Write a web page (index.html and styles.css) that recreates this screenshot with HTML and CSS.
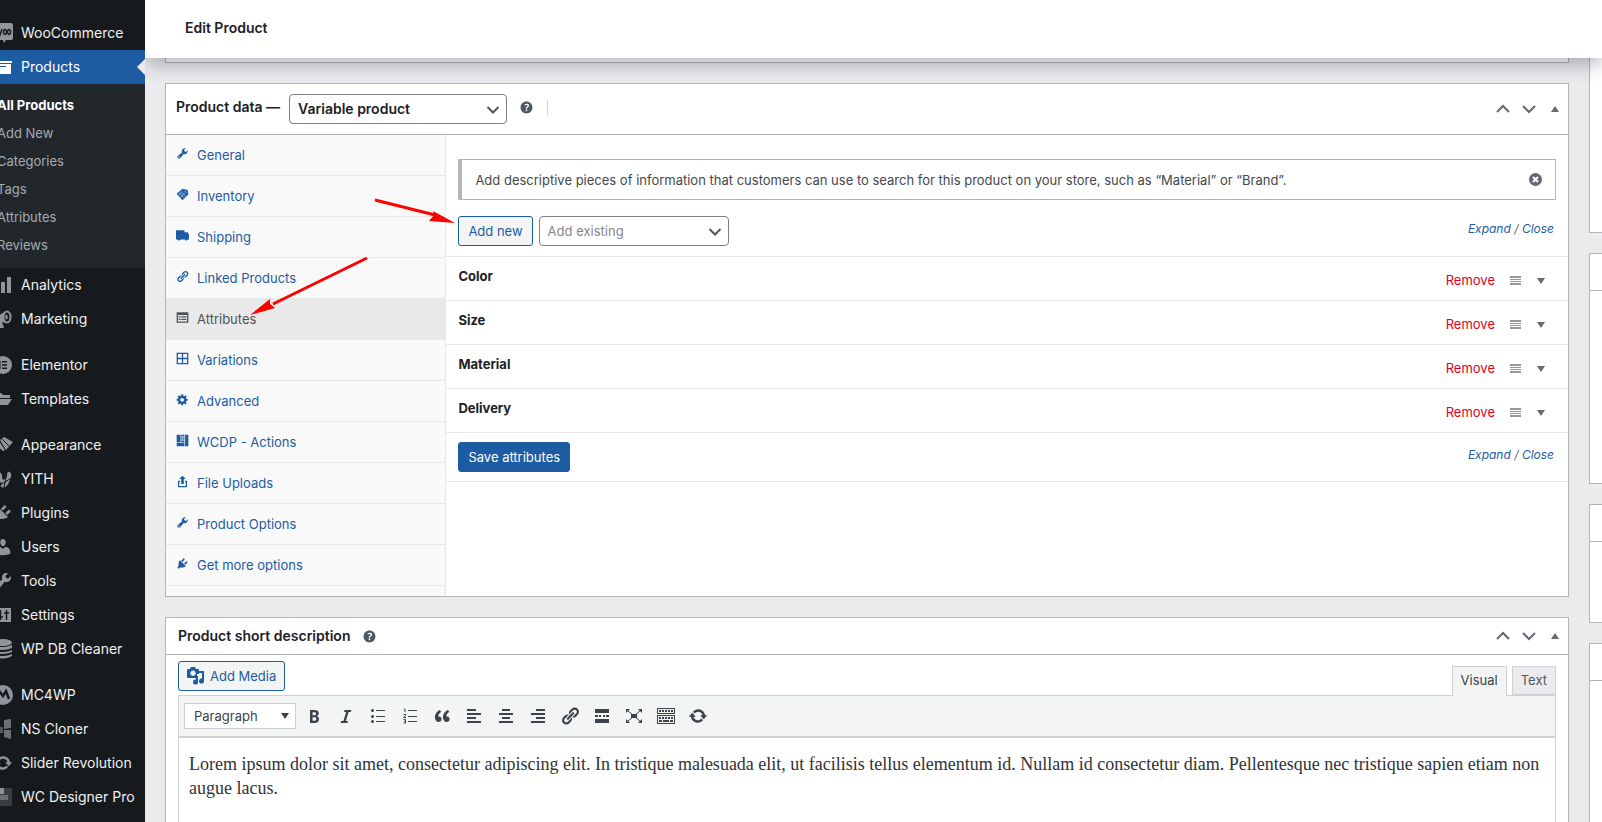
FILE: index.html
```html
<!DOCTYPE html>
<html lang="en">
<head>
<meta charset="utf-8">
<title>Edit Product</title>
<link rel="stylesheet" href="styles.css">
</head>
<body>
<svg class="sprite" aria-hidden="true">
  <symbol id="wrench" viewBox="0 0 20 20"><path d="M16.68 9.77c-1.34 1.34-3.3 1.67-4.95.99l-5.41 6.52c-.99.99-2.59.99-3.58 0s-.99-2.59 0-3.57l6.52-5.42c-.68-1.65-.35-3.61.99-4.95 1.28-1.28 3.12-1.62 4.72-1.06l-2.89 2.89 2.82 2.82 2.86-2.87c.53 1.58.18 3.39-1.08 4.65zM3.81 16.21c.4.39 1.04.39 1.43 0 .4-.4.4-1.04 0-1.43-.39-.4-1.03-.4-1.43 0-.39.39-.39 1.03 0 1.43z"/></symbol>
  <symbol id="plug" viewBox="0 0 20 20"><path d="M13.11 4.36L9.87 7.6 8 5.73l3.24-3.24c.35-.34 1.05-.2 1.56.32.52.51.66 1.21.31 1.55zm-8 1.77l.91-1.12 9.01 9.01-1.19.84c-.71.71-2.63 1.16-3.82 1.16H6.14L4.9 17.26c-.59.59-1.54.59-2.12 0-.59-.58-.59-1.53 0-2.12l1.24-1.24v-3.88c0-1.13.4-3.19 1.09-3.89zm7.26 3.97l3.24-3.24c.34-.35 1.04-.21 1.55.31.52.51.66 1.21.31 1.55l-3.24 3.25z"/></symbol>
  <symbol id="link" viewBox="0 0 20 20"><path d="M17.74 2.76c1.68 1.69 1.68 4.41 0 6.1l-1.53 1.52c-1.12 1.12-2.7 1.47-4.14 1.09l2.62-2.61.76-.77.76-.76c.84-.84.84-2.2 0-3.04-.84-.85-2.2-.85-3.04 0l-.77.76-3.38 3.38c-.37-1.44-.02-3.02 1.1-4.14l1.52-1.53c1.69-1.68 4.42-1.68 6.1 0zM8.59 13.43l5.34-5.34c.42-.42.42-1.1 0-1.52-.44-.43-1.13-.39-1.53 0l-5.33 5.34c-.42.42-.42 1.1 0 1.52.44.43 1.13.39 1.52 0zm-.76 2.29l4.14-4.15c.38 1.44.03 3.02-1.09 4.14l-1.52 1.53c-1.69 1.68-4.41 1.68-6.1 0-1.68-1.68-1.68-4.42 0-6.1l1.53-1.52c1.12-1.12 2.7-1.47 4.14-1.1l-4.14 4.15c-.85.84-.85 2.2 0 3.05.84.84 2.2.84 3.04 0z"/></symbol>
  <symbol id="gear" viewBox="0 0 20 20"><path d="M18 12h-2.18c-.17.7-.44 1.35-.81 1.93l1.54 1.54-2.1 2.1-1.54-1.54c-.58.36-1.23.63-1.91.79V19H8v-2.18c-.68-.16-1.33-.43-1.91-.79l-1.54 1.54-2.12-2.12 1.54-1.54c-.36-.58-.63-1.23-.79-1.91H1V9.03h2.17c.16-.7.44-1.35.8-1.94L2.43 5.55l2.1-2.1 1.54 1.54c.58-.37 1.24-.64 1.93-.81V2h3v2.18c.68.16 1.33.43 1.91.79l1.54-1.54 2.12 2.12-1.54 1.54c.36.59.64 1.24.8 1.94H18V12zm-8.5 1.5c1.66 0 3-1.34 3-3s-1.34-3-3-3-3 1.34-3 3 1.34 3 3 3z"/></symbol>
  <symbol id="user" viewBox="0 0 20 20"><path d="M10 9.25c-2.27 0-2.73-3.44-2.73-3.44C7 4.02 7.82 2 9.97 2c2.16 0 2.98 2.02 2.71 3.81 0 0-.41 3.44-2.68 3.44zm0 2.57L12.72 10c2.39 0 4.52 2.33 4.52 4.53v2.49s-3.65 1.13-7.24 1.13c-3.65 0-7.24-1.13-7.24-1.13v-2.49c0-2.25 1.94-4.48 4.47-4.48z"/></symbol>
  <symbol id="help" viewBox="0 0 20 20"><path d="M17 10c0-3.87-3.14-7-7-7-3.87 0-7 3.13-7 7s3.13 7 7 7c3.86 0 7-3.13 7-7zm-6.3 1.48H9.14v-.43c0-.38.08-.7.24-.98s.46-.57.88-.89c.41-.29.68-.53.81-.71.14-.18.2-.39.2-.62 0-.25-.09-.44-.28-.58-.19-.13-.45-.19-.79-.19-.58 0-1.25.19-2 .57l-.64-1.28c.87-.49 1.8-.74 2.77-.74.81 0 1.45.2 1.92.58.48.39.71.91.71 1.55 0 .43-.09.8-.29 1.11-.19.32-.57.67-1.11 1.06-.38.28-.61.49-.71.63-.1.15-.15.34-.15.57v.35zm-1.47 2.74c-.18-.17-.27-.42-.27-.73 0-.33.08-.58.26-.75s.43-.25.77-.25c.32 0 .57.09.75.26s.27.42.27.74c0 .3-.09.55-.27.72-.18.18-.43.27-.75.27-.33 0-.58-.09-.76-.26z"/></symbol>
  <symbol id="refresh" viewBox="0 0 20 20"><path d="M10.2 3.28c3.53 0 6.43 2.61 6.92 6h2.08l-3.5 4-3.5-4h2.32c-.45-1.97-2.21-3.45-4.32-3.45-1.45 0-2.73.71-3.54 1.78L4.95 5.66C6.23 4.2 8.11 3.28 10.2 3.28zm-.4 13.44c-3.52 0-6.43-2.61-6.92-6H.8l3.5-4c1.17 1.33 2.33 2.67 3.5 4H5.48c.45 1.97 2.21 3.45 4.32 3.45 1.45 0 2.73-.71 3.54-1.78l1.71 1.95c-1.28 1.46-3.15 2.38-5.25 2.38z"/></symbol>
  <symbol id="chev" viewBox="0 0 14 14"><path d="M1.500 4l5.500 5.500L12.500 4" fill="none" stroke="currentColor" stroke-width="2"/></symbol>
  <symbol id="chev-up" viewBox="0 0 14 14"><path d="M1 10l6-6 6 6" fill="none" stroke="currentColor" stroke-width="2"/></symbol>
  <symbol id="chev-down" viewBox="0 0 14 14"><path d="M1 4l6 6 6-6" fill="none" stroke="currentColor" stroke-width="2"/></symbol>
  <symbol id="tri-up" viewBox="0 0 8 8"><path d="M4 1l4 6H0z"/></symbol>
  <symbol id="tri-down" viewBox="0 0 8 8"><path d="M0 1h8L4 7z"/></symbol>
  <symbol id="handle" viewBox="0 0 11 10"><path d="M0 0h11v2H0zM0 3h11v1H0zM0 5h11v1H0zM0 7h11v2H0z" /></symbol>
</svg>

<div class="app">
  <nav class="sidebar" aria-label="Admin menu">
    <ul class="menu">
      <li><a class="item" href="#"><svg viewBox="0 0 20 20"><path d="M2 0h16q2 0 2 2v13q0 2-2 2h-5l-2 3-1-3H2q-2 0-2-2V2q0-2 2-2z"/><path d="M2 6l2 6 1.500-5 1.500 5 2-6M12 6.500a1.500 2.500 0 1 0 .1 0zM16 6.500a1.500 2.500 0 1 0 .1 0z" fill="none" stroke="#171a1d" stroke-width="1.500"/></svg>WooCommerce</a></li>
      <li><a class="item item-current" href="#"><svg viewBox="0 0 20 20"><path d="M1 4h18v2H1zM2 7h16v10H2zM6 9v1h7V9z" fill-rule="evenodd"/></svg>Products</a>
        <ul class="submenu">
          <li><a class="current" href="#">All Products</a></li>
          <li><a href="#">Add New</a></li>
          <li><a href="#">Categories</a></li>
          <li><a href="#">Tags</a></li>
          <li><a href="#">Attributes</a></li>
          <li><a href="#">Reviews</a></li>
        </ul>
      </li>
      <li><a class="item" href="#"><svg viewBox="0 0 20 20"><path d="M2 11h4v7H2zM8 7h4v11H8zM14 2h4v16h-4z"/></svg>Analytics</a></li>
      <li class="group-end"><a class="item" href="#"><svg viewBox="0 0 20 20"><path d="M2 9l11-7v12l-4-1 2 6H7l-2-6H3z"/><ellipse cx="14" cy="8" rx="3.500" ry="5.500" fill="#171a1d" stroke="#8f959b" stroke-width="2"/><ellipse cx="13.500" cy="8" rx="1.200" ry="2.500"/></svg>Marketing</a></li>
      <li><a class="item" href="#"><svg viewBox="0 0 20 20"><circle cx="10" cy="10" r="9"/><path d="M5.500 6h2v8h-2zM9 6h5v1.600H9zM9 9.200h5v1.600H9zM9 12.400h5V14H9z" fill="#171a1d"/></svg>Elementor</a></li>
      <li class="group-end"><a class="item" href="#"><svg viewBox="0 0 20 20"><path d="M2 4h6l2 2h7v3H2zM2 10h17l-4 6H2z"/></svg>Templates</a></li>
      <li><a class="item" href="#"><svg viewBox="0 0 20 20"><path d="M7 5l4-3 9 5-7 8zM6 6l6 9-2 1-5-4-3 6-2-1 4-6z"/><path d="M9 4l7 7" stroke="#171a1d"/></svg>Appearance</a></li>
      <li><a class="item" href="#"><svg viewBox="0 0 20 20"><path d="M4 4c2-2 5 0 5 3s1 5 3 3 1-6 3-7 4 2 3 5-3 9-6 10-5 0-4-2l4-3c-4 2-7 0-7-4z"/><path d="M14 4l-3 14M18 9l-7 5" stroke="#171a1d" fill="none"/></svg>YITH</a></li>
      <li><a class="item" href="#"><svg><use href="#plug"/></svg>Plugins</a></li>
      <li><a class="item" href="#"><svg><use href="#user"/></svg>Users</a></li>
      <li><a class="item" href="#"><svg><use href="#wrench"/></svg>Tools</a></li>
      <li><a class="item" href="#"><svg viewBox="0 0 20 20"><path d="M2 3h16v14H2z"/><path d="M7.500 5v10M5 12h5M13.500 5v10M11 8h5" stroke="#171a1d" stroke-width="1.500"/></svg>Settings</a></li>
      <li class="group-end"><a class="item" href="#"><svg viewBox="0 0 20 20"><ellipse cx="10" cy="3.500" rx="9" ry="3.500"/><path d="M1 6q9 4 18 0v3q-9 4-18 0zM1 11q9 4 18 0v2q-9 4-18 0zM1 15q9 4 18 0v2q-9 5-18 0z"/></svg>WP DB Cleaner</a></li>
      <li><a class="item" href="#"><svg viewBox="0 0 20 20"><circle cx="10" cy="10" r="10"/><path d="M4 14l3-7 3 4 3-5 3 8" fill="none" stroke="#171a1d" stroke-width="2.500"/></svg>MC4WP</a></li>
      <li><a class="item" href="#"><svg viewBox="0 0 20 20"><path d="M1 5l5 3v7l-5 3zM7 8h3v6H7z" opacity=".5"/><path d="M11 1l7-1v9l-7 1zM11 11h7v9l-7-2z" opacity=".7"/></svg>NS Cloner</a></li>
      <li><a class="item" href="#"><svg><use href="#refresh"/></svg>Slider Revolution</a></li>
      <li><a class="item" href="#"><svg viewBox="0 0 20 20"><path d="M1 1h18v18H1z" fill="#3a3c3e"/><path d="M7 1h4v6H7z"/><path d="M7 8h8v5H7z" fill="#6a6c6e"/></svg>WC Designer Pro</a></li>
    </ul>
  </nav>

  <div class="content">
    <header class="topbar"><h1>Edit Product</h1></header>
    <div class="board">
      <main class="main">
        <section class="panel panel-stub" aria-label="Product description"></section>

        <section class="panel">
          <div class="panel-head head-data">
            <label class="panel-title" for="ptype">Product data —</label>
            <span class="select select-type"><select id="ptype"><option>Variable product</option></select><svg><use href="#chev"/></svg></span>
            <svg class="help"><use href="#help"/></svg>
            <span class="vline"></span>
            <span class="tools">
              <button type="button" aria-label="Move up"><svg><use href="#chev-up"/></svg></button>
              <button type="button" aria-label="Move down"><svg><use href="#chev-down"/></svg></button>
              <button type="button" aria-label="Toggle panel"><svg class="tri"><use href="#tri-up"/></svg></button>
            </span>
          </div>
          <div class="data">
            <ul class="tabs">
              <li><a href="#"><svg><use href="#wrench"/></svg>General</a></li>
              <li><a href="#"><svg viewBox="0 0 20 20"><path d="M1 9l9-8 8 2 1 7-9 9z"/><path d="M5 8l7 7M8 6l7 7M4 11l6-6M7 14l7-7M13 4l3 3" stroke="#f9f9f9" stroke-width=".8"/></svg>Inventory</a></li>
              <li><a href="#"><svg viewBox="0 0 20 20"><path d="M0 2h13v3h5l2 4v7h-2a2.400 2.400 0 0 1-4.500 0H7a2.400 2.400 0 0 1-4.500 0H0z"/></svg>Shipping</a></li>
              <li><a href="#"><svg><use href="#link"/></svg>Linked Products</a></li>
              <li><a class="active" href="#"><svg viewBox="0 0 20 20"><path d="M1 2h18v16H1zM3 6v10h14V6zM4 8h3v2H4zM8 8h8v2H8zM4 12h3v2H4zM8 12h8v2H8z" fill-rule="evenodd"/></svg>Attributes</a></li>
              <li><a href="#"><svg viewBox="0 0 20 20"><path d="M1 1h18v18H1zM3 3v6h6V3zM11 3v6h6V3zM3 11v6h6v-6zM11 11v6h6v-6z" fill-rule="evenodd"/></svg>Variations</a></li>
              <li><a href="#"><svg><use href="#gear"/></svg>Advanced</a></li>
              <li><a href="#"><svg viewBox="0 0 20 20"><path d="M1 1h6v12H1zM1 14h12v5H1zM14 1h5v18h-5zM8 1h5v3H8zM8 5h2v4H8zM11 5h2v4h-2zM8 10h5v3H8z"/></svg>WCDP - Actions</a></li>
              <li><a href="#"><svg viewBox="0 0 20 20"><path d="M10 1l5 5h-3v8H8V6H5zM3 9h3v2H5v6h10v-6h-1V9h3v10H3z"/></svg>File Uploads</a></li>
              <li><a href="#"><svg><use href="#wrench"/></svg>Product Options</a></li>
              <li><a href="#"><svg><use href="#plug"/></svg>Get more options</a></li>
            </ul>
            <div class="attributes">
              <div class="notice">
                <p>Add descriptive pieces of information that customers can use to search for this product on your store, such as “Material” or “Brand”.</p>
                <button type="button" aria-label="Dismiss"><svg viewBox="0 0 13 13"><circle cx="6.500" cy="6.500" r="6.500"/><path d="M4 4l5 5M9 4l-5 5" stroke="#fff" stroke-width="2"/></svg></button>
              </div>
              <div class="bar">
                <button class="btn" type="button">Add new</button>
                <span class="select select-existing"><select aria-label="Add existing"><option>Add existing</option></select><svg><use href="#chev"/></svg></span>
                <span class="toggles"><a href="#">Expand</a> / <a href="#">Close</a></span>
              </div>
              <div class="row"><h3>Color</h3><a class="remove" href="#">Remove</a><svg class="handle"><use href="#handle"/></svg><svg class="tri"><use href="#tri-down"/></svg></div>
              <div class="row"><h3>Size</h3><a class="remove" href="#">Remove</a><svg class="handle"><use href="#handle"/></svg><svg class="tri"><use href="#tri-down"/></svg></div>
              <div class="row"><h3>Material</h3><a class="remove" href="#">Remove</a><svg class="handle"><use href="#handle"/></svg><svg class="tri"><use href="#tri-down"/></svg></div>
              <div class="row"><h3>Delivery</h3><a class="remove" href="#">Remove</a><svg class="handle"><use href="#handle"/></svg><svg class="tri"><use href="#tri-down"/></svg></div>
              <div class="bar bar-save">
                <button class="btn btn-primary" type="button">Save attributes</button>
                <span class="toggles"><a href="#">Expand</a> / <a href="#">Close</a></span>
              </div>
            </div>
          </div>
        </section>

        <section class="panel">
          <div class="panel-head">
            <h2 class="panel-title">Product short description</h2>
            <svg class="help"><use href="#help"/></svg>
            <span class="tools">
              <button type="button" aria-label="Move up"><svg><use href="#chev-up"/></svg></button>
              <button type="button" aria-label="Move down"><svg><use href="#chev-down"/></svg></button>
              <button type="button" aria-label="Toggle panel"><svg class="tri"><use href="#tri-up"/></svg></button>
            </span>
          </div>
          <div class="editor">
            <div class="editor-top">
              <button class="btn btn-media" type="button"><svg viewBox="0 0 18 18"><path d="M1 2h2l1-2h4l1 2h2q1 0 1 1v4h-2v4H1q-1 0-1-1V3q0-1 1-1zM6 3.500a2.700 2.700 0 1 0 .1 0z" fill-rule="evenodd"/><path d="M12 4h5v10a2.500 2.500 0 1 1-2-2.400V6h-3zM9 9h2v6a2.500 2.500 0 1 1-2-2.400z"/></svg>Add Media</button>
              <div class="modes"><button class="mode mode-on" type="button">Visual</button><button class="mode" type="button">Text</button></div>
            </div>
            <div class="frame">
              <div class="toolbar">
                <button class="format" type="button">Paragraph<svg class="tri"><use href="#tri-down"/></svg></button>
                <button type="button" aria-label="Bold"><svg viewBox="0 0 20 20"><path d="M6 4v13h4.540c1.370 0 2.460-.33 3.260-1 .8-.66 1.200-1.580 1.200-2.770 0-.84-.17-1.510-.51-2.010s-.9-.85-1.670-1.030v-.09c.57-.1 1.020-.4 1.360-.9s.51-1.130.51-1.910c0-1.140-.39-1.980-1.170-2.500C12.750 4.260 11.500 4 9.780 4H6zm2.570 5.150V6.260h1.360c.73 0 1.270.11 1.610.32.34.22.51.58.51 1.070 0 .54-.16.92-.47 1.150s-.82.35-1.510.35h-1.500zm0 2.190h1.600c1.440 0 2.160.53 2.160 1.610 0 .6-.17 1.050-.51 1.340s-.86.43-1.570.43H8.570v-3.380z"/></svg></button>
                <button type="button" aria-label="Italic"><svg viewBox="0 0 20 20"><path d="M14.780 6h-2.130l-2.800 9h2.120l-.62 2H4.600l.62-2h2.140l2.800-9H8.030l.62-2h6.750z"/></svg></button>
                <button type="button" aria-label="Bulleted list"><svg viewBox="0 0 20 20"><path d="M8 4h9v1H8zM8 10h9v1H8zM8 15h9v1H8z"/><circle cx="4.500" cy="4.500" r="1.500"/><circle cx="4.500" cy="10.500" r="1.500"/><circle cx="4.500" cy="15.500" r="1.500"/></svg></button>
                <button type="button" aria-label="Numbered list"><svg viewBox="0 0 20 20"><path d="M8 4h9v1H8zM8 10h9v1H8zM8 15h9v1H8z"/><path d="M4 3h1v3M3.500 8.500h2v1.500l-2 1.500h2.500M3.500 13.500h2v3.500h-2M4 15.200h1.500" fill="none" stroke="currentColor"/></svg></button>
                <button type="button" aria-label="Blockquote"><svg viewBox="0 0 20 20"><path d="M9.490 13.220c0-.74-.2-1.380-.61-1.900-.62-.78-1.830-.88-2.530-.72-.29-1.650 1.110-3.750 2.920-4.650L7.880 4c-2.730 1.300-5.420 4.280-4.960 8.050C3.210 14.430 4.590 16 6.540 16c.85 0 1.560-.25 2.120-.75s.83-1.180.83-2.030zm8.050 0c0-.74-.2-1.380-.61-1.900-.63-.78-1.830-.88-2.530-.72-.29-1.650 1.110-3.750 2.920-4.650L15.930 4c-2.730 1.300-5.410 4.280-4.950 8.050.29 2.380 1.660 3.950 3.610 3.950.85 0 1.560-.25 2.120-.75s.83-1.180.83-2.030z"/></svg></button>
                <button type="button" aria-label="Align left"><svg viewBox="0 0 20 20"><path d="M3 3h9v2H3zM3 7h14v2H3zM3 11h9v2H3zM3 15h14v2H3z"/></svg></button>
                <button type="button" aria-label="Align center"><svg viewBox="0 0 20 20"><path d="M6 3h8v2H6zM3 7h14v2H3zM6 11h8v2H6zM3 15h14v2H3z"/></svg></button>
                <button type="button" aria-label="Align right"><svg viewBox="0 0 20 20"><path d="M8 3h9v2H8zM3 7h14v2H3zM8 11h9v2H8zM3 15h14v2H3z"/></svg></button>
                <button type="button" aria-label="Insert link"><svg><use href="#link"/></svg></button>
                <button type="button" aria-label="Read more"><svg viewBox="0 0 20 20"><path d="M3 3h14v4H3zM3 9h3v2H3zM7 9h2v2H7zM11 9h2v2h-2zM14 9h3v2h-3zM3 13h14v4H3z"/></svg></button>
                <button type="button" aria-label="Fullscreen"><svg viewBox="0 0 20 20"><path d="M7 8h6v4H7zM2 3h4L2 7zM18 3h-4l4 4zM2 17h4l-4-4zM18 17h-4l4-4z"/><path d="M3 4l14 12M17 4L3 16" stroke="currentColor"/></svg></button>
                <button type="button" aria-label="Toolbar toggle"><svg viewBox="0 0 20 20"><path d="M1 2h18v6H1zM2 3v4h16V3zM1 9h18v9H1zM2 10v7h16v-7z" fill-rule="evenodd"/><path d="M3 5h14M3 12h14" fill="none" stroke="currentColor" stroke-width="2" stroke-dasharray="2 1"/><path d="M3 14h3v2H3zM7 14h6v2H7zM14 14h3v2h-3z"/></svg></button>
                <button type="button" aria-label="Refresh"><svg><use href="#refresh"/></svg></button>
              </div>
              <div class="copy" contenteditable="true" spellcheck="false">Lorem ipsum dolor sit amet, consectetur adipiscing elit. In tristique malesuada elit, ut facilisis tellus elementum id. Nullam id consectetur diam. Pellentesque nec tristique sapien etiam non augue lacus.</div>
            </div>
          </div>
        </section>
      </main>

      <aside class="side" aria-label="Product settings">
        <section class="panel side-a"></section>
        <section class="panel side-b"><div class="panel-head"></div></section>
        <section class="panel side-c"><div class="panel-head"></div></section>
        <section class="panel side-d"><div class="panel-head"></div></section>
      </aside>
    </div>
  </div>
</div>

<svg class="arrows" viewBox="0 0 220 140" aria-hidden="true">
  <path d="M25 20l60 15M17 78L-77 124" stroke-width="3"/>
  <path d="M105 43L83 31l1 4-5 6zM-100 135l20-16v5l5 4z"/>
</svg>
</body>
</html>
```

FILE: styles.css
```css
* { box-sizing: border-box; }

body {
  margin: 0;
  height: 100vh;
  overflow: hidden;
  background: #ebebed;
  color: #1d2125;
  font: 13px/18px Inter, "Liberation Sans", sans-serif;
}

ul, h1, h2, h3, p { margin: 0; padding: 0; list-style: none; }
a { color: #1d5ca3; text-decoration: none; }
button, select { font: inherit; margin: 0; }
button { padding: 0; border: 0; background: none; color: inherit; cursor: pointer; }
svg { display: block; flex: none; fill: currentColor; }
.sprite { display: none; }

.app { display: flex; height: 100%; }

/* Admin menu */
.sidebar { flex: none; width: 145px; overflow: hidden; background: #171a1d; }
.menu { width: 160px; margin-left: -15px; padding-top: 16px; }
.item {
  display: flex;
  align-items: center;
  gap: 8px;
  height: 34px;
  padding-left: 8px;
  color: #f0f0f1;
  font-size: 14px;
  white-space: nowrap;
}
.item svg { width: 20px; height: 20px; color: #8f959b; }
.item-current { position: relative; background: #1d5ca3; color: #fff; }
.item-current svg { color: #fff; }
.item-current::after {
  content: "";
  position: absolute;
  right: 0;
  top: 9px;
  border: 8px solid transparent;
  border-left: 0;
  border-right-color: #ebebed;
}
.group-end { margin-bottom: 12px; }
.submenu { padding: 7px 0 9px; background: #22272b; }
.submenu a { display: block; padding: 5px 12px; color: #a6abb0; }
.submenu .current { color: #fff; font-weight: 700; }

/* Page frame */
.content { flex: 1; min-width: 0; display: flex; flex-direction: column; overflow: hidden; }
.topbar {
  position: relative;
  z-index: 1;
  flex: none;
  padding: 19px 40px 21px;
  background: #fff;
  box-shadow: 0 6px 20px rgba(20, 25, 45, .32);
}
.topbar h1 { font-size: 14px; line-height: 18px; font-weight: 600; }
.board {
  flex: 1;
  min-height: 0;
  display: grid;
  grid-template-columns: minmax(0, 1fr) 280px;
  gap: 20px;
  margin-right: -267px;
  padding-left: 20px;
}
.main, .side { display: flex; flex-direction: column; gap: 20px; }
.panel { flex: none; border: 1px solid #b4b5b9; background: #fff; }
.panel-stub { height: 5px; border-top: 0; }
.panel-head {
  display: flex;
  align-items: center;
  min-height: 37px;
  padding: 0 6px 0 12px;
  border-bottom: 1px solid #b4b5b9;
}
.head-data { min-height: 51px; padding-left: 10px; }
.panel-title { font-size: 14px; font-weight: 600; white-space: nowrap; }
.help { width: 17px; height: 17px; margin-left: 11px; color: #50575e; }
.vline { width: 1px; height: 15px; margin-left: 12px; background: #d5d5d8; }
.head-data .panel-title, .head-data .help, .head-data .vline { margin-bottom: 4px; }
.tools { display: flex; align-items: center; gap: 12px; margin-left: auto; color: #646970; }
.tools button { display: grid; place-items: center; width: 14px; height: 14px; }
.tools svg { width: 14px; height: 14px; }
.tools .tri, .tri { width: 8px; height: 8px; }

/* Drop-downs */
.select { position: relative; display: inline-flex; }
.select select {
  appearance: none;
  width: 100%;
  height: 30px;
  padding: 0 28px 0 8px;
  border: 1px solid #7a7f85;
  border-radius: 4px;
  background: #fff;
  color: inherit;
}
.select svg { position: absolute; right: 7px; top: 9px; width: 14px; height: 14px; pointer-events: none; color: #50575e; }
.select-type { width: 218px; margin-left: 9px; font-size: 14px; font-weight: 600; }
.select-existing { width: 190px; color: #85888c; }

/* Product data */
.data { display: flex; }
.tabs { width: 20%; padding-bottom: 10px; background: #f9f9f9; border-right: 1px solid #e8e8e8; }
.tabs a {
  display: flex;
  align-items: center;
  gap: 8px;
  height: 41px;
  padding-left: 10px;
  border-bottom: 1px solid #e8e8e8;
}
.tabs svg { width: 13px; height: 13px; margin-bottom: 4px; }
.tabs .active { background: #e9e9e9; color: #50545a; }
.attributes { flex: 1; min-width: 0; padding-top: 24px; }
.notice {
  display: flex;
  align-items: center;
  justify-content: space-between;
  min-height: 41px;
  margin: 0 12px;
  padding: 0 13px;
  border: 1px solid #b4b5b9;
  border-left-width: 4px;
  color: #44484d;
}
.notice svg { width: 13px; height: 13px; color: #646970; }
.bar { display: flex; align-items: center; gap: 6px; padding: 16px 14px 10px 12px; border-bottom: 1px solid #e8e8e8; }
.bar-save { padding: 9px 14px 9px 12px; }
.btn {
  display: inline-flex;
  align-items: center;
  height: 30px;
  padding: 0 9px;
  border: 1px solid #1d5ca3;
  border-radius: 3px;
  background: #f3f5f5;
  color: #1d5ca3;
  white-space: nowrap;
}
.btn-primary { background: #1d5ca3; color: #fff; }
.toggles { margin-left: auto; padding-bottom: 4px; font-size: 12px; font-style: italic; color: #646970; }
.row {
  display: flex;
  align-items: center;
  height: 44px;
  padding: 0 23px 0 12px;
  border-bottom: 1px solid #e8e8e8;
  color: #646970;
}
.row h3 { flex: 1; padding-bottom: 5px; font-size: 13px; font-weight: 700; color: #1d2125; }
.row svg { margin-top: 4px; }
.remove { padding-top: 3px; color: #e60020; }
.row .handle { width: 11px; height: 10px; margin: 4px 16px 0 15px; color: #999; }

/* Editor */
.editor { padding: 6px 12px 0; }
.editor-top { display: flex; justify-content: space-between; align-items: flex-start; height: 34px; }
.btn-media { gap: 5px; padding: 0 8px; }
.btn-media svg { width: 18px; height: 18px; }
.modes { display: flex; gap: 5px; align-self: flex-end; height: 29px; }
.mode { position: relative; z-index: 1; height: 29px; padding: 0 8px 2px; border: 1px solid #d0d1d4; background: #ebebed; color: #50575e; }
.mode-on { height: 30px; border-bottom: 0; padding-bottom: 4px; background: #f3f5f5; color: #3c434a; }
.frame { border: 1px solid #d0d1d4; height: 180px; }
.toolbar {
  display: flex;
  align-items: center;
  gap: 12px;
  height: 42px;
  padding: 0 5px;
  border-bottom: 2px solid #d0d1d4;
  background: #f3f5f5;
  color: #3c434a;
}
.toolbar button svg { width: 20px; height: 20px; }
.toolbar .format {
  display: flex;
  align-items: center;
  justify-content: space-between;
  width: 112px;
  height: 26px;
  margin-right: -4px;
  padding: 0 6px 0 9px;
  border: 1px solid #d0d1d4;
  background: #fff;
}
.toolbar .format .tri { width: 8px; height: 8px; }
.copy { padding: 14px 10px; font: 18px/24px "Liberation Serif", serif; color: #2f3337; outline: 0; }

.side-a { height: 175px; border-top: 0; }
.side-b { height: 231px; }
.side-c { height: 119px; }
.side-d { height: 240px; }

/* Annotation arrows drawn over the page */
.arrows {
  position: absolute;
  left: 350px;
  top: 180px;
  width: 220px;
  height: 140px;
  overflow: visible;
  pointer-events: none;
  fill: #f00;
  stroke: #f00;
  stroke-width: 0;
  z-index: 2;
}
```
